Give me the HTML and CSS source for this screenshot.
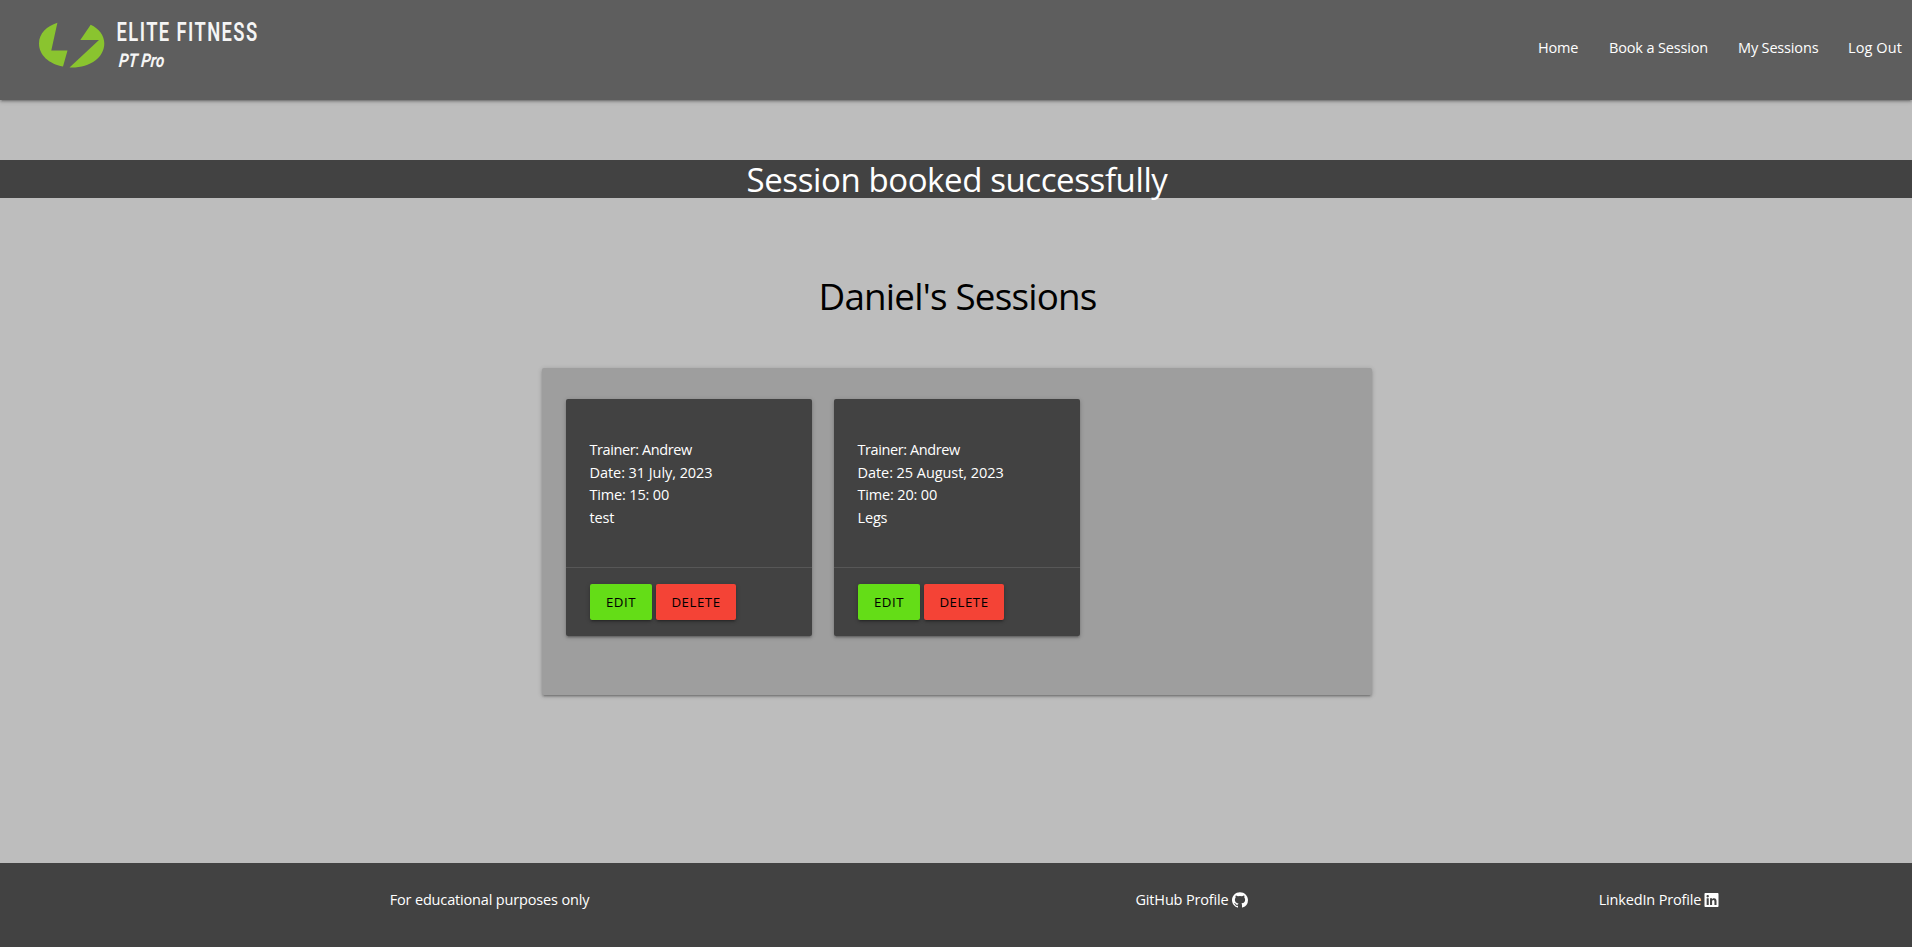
FILE: index.html
```html
<!DOCTYPE html>
<html lang="en">
<head>
<meta charset="utf-8">
<title>Elite Fitness - My Sessions</title>
<link rel="stylesheet" href="styles.css">
</head>
<body>
<header class="site-header">
  <a class="logo" aria-label="Elite Fitness PT Pro">
    <svg width="260" height="84" viewBox="30 10 260 84">
      <path fill="#8ac42f" d="M57.4 22.8 51.3 50.5H67.5L63 66.5C49 64 39 55 39 43.5C39 33.500 47 26 57.400 22.800Z"/>
      <path fill="#8ac42f" d="M90.700 24.700 80.300 40H99L69.500 67.500C89 68.500 104.300 58 104.300 43.500C104.300 35.500 99 28.500 90.700 24.700Z"/>
      <text class="logo-title" x="116.600" y="41" textLength="142" lengthAdjust="spacingAndGlyphs">ELITE FITNESS</text>
      <text class="logo-sub" transform="translate(118.500 67) skewX(-5)" textLength="45.500" lengthAdjust="spacingAndGlyphs">PT Pro</text>
    </svg>
  </a>
  <nav class="main-nav">
    <a class="nav-home">Home</a>
    <a class="nav-book">Book a Session</a>
    <a class="nav-mine">My Sessions</a>
    <a class="nav-out">Log Out</a>
  </nav>
</header>
<main class="content">
  <h4 class="flash">Session booked successfully</h4>
  <h3 class="page-title">Daniel's Sessions</h3>
  <section class="panel">
    <article class="card">
      <div class="card-content">
        <p class="trainer">Trainer: Andrew</p>
        <p class="date">Date: 31 July, 2023</p>
        <p>Time: 15: 00</p>
        <p>test</p>
      </div>
      <div class="card-action">
        <a class="btn btn-edit">EDIT</a>
        <a class="btn btn-delete">DELETE</a>
      </div>
    </article>
    <article class="card">
      <div class="card-content">
        <p class="trainer">Trainer: Andrew</p>
        <p class="date">Date: 25 August, 2023</p>
        <p>Time: 20: 00</p>
        <p>Legs</p>
      </div>
      <div class="card-action">
        <a class="btn btn-edit">EDIT</a>
        <a class="btn btn-delete">DELETE</a>
      </div>
    </article>
  </section>
</main>
<footer class="site-footer">
  <p>For educational purposes only</p>
  <a class="social"><span>GitHub Profile</span>
    <svg width="16" height="16" viewBox="0 0 16 16"><path fill="#fff" d="M8 .2C3.600.2 0 3.700 0 8.100c0 3.500 2.300 6.500 5.500 7.500.4.100.5-.2.500-.4v-1.400c-2.200.5-2.700-1-2.700-1-.4-.9-.9-1.200-.9-1.200-.7-.5.1-.5.1-.5.800.100 1.200.8 1.200.8.700 1.200 1.900.9 2.300.7.100-.5.300-.9.500-1.100-1.800-.2-3.600-.9-3.600-3.900 0-.9.300-1.600.8-2.100-.1-.2-.4-1 .1-2.100 0 0 .7-.2 2.200.8a7.600 7.600 0 0 1 4 0c1.500-1 2.200-.8 2.200-.8.400 1.100.2 1.900.1 2.100.5.600.8 1.300.8 2.100 0 3.100-1.900 3.700-3.700 3.900.3.300.6.800.6 1.500v2.200c0 .2.100.5.500.4A7.900 7.900 0 0 0 16 8.100C16 3.700 12.400.2 8 .2z"/></svg>
  </a>
  <a class="social"><span>LinkedIn Profile</span>
    <svg width="15" height="16" viewBox="0 0 448 512"><path fill="#fff" d="M416 32H31.900C14.300 32 0 46.500 0 64.300v383.400C0 465.500 14.300 480 31.900 480H416c17.600 0 32-14.500 32-32.300V64.300c0-17.800-14.400-32.300-32-32.300zM135.400 416H69V202.200h66.500V416zm-33.200-243c-21.300 0-38.500-17.300-38.500-38.500S80.900 96 102.200 96c21.200 0 38.500 17.300 38.500 38.500 0 21.300-17.200 38.500-38.500 38.500zm282.100 243h-66.400V312c0-24.800-.5-56.700-34.500-56.700-34.600 0-39.900 27-39.900 54.900V416h-66.400V202.200h63.700v29.200h.9c8.900-16.800 30.600-34.500 62.900-34.500 67.200 0 79.700 44.300 79.700 101.900V416z"/></svg>
  </a>
</footer>
</body>
</html>
```
FILE: styles.css
```css
* { box-sizing: border-box; }
body {
  margin: 0;
  min-height: 947px;
  display: flex;
  flex-direction: column;
  background: #bdbdbd;
  color: #fff;
  font: 14.5px/22.5px "Segoe UI", "Open Sans", "Noto Sans", sans-serif;
  letter-spacing: -0.16px;
}
p, h3, h4 { margin: 0; font-weight: 400; }
.site-header {
  height: 100px;
  padding: 10px 9px 0 30px;
  display: flex;
  justify-content: space-between;
  background: #5e5e5e;
  box-shadow: 0 2px 2px 0 rgba(0,0,0,.14), 0 3px 1px -2px rgba(0,0,0,.12), 0 1px 5px 0 rgba(0,0,0,.2);
}
.logo svg { display: block; overflow: visible; }
.logo-title { font: 600 26px Roboto, sans-serif; fill: #f5f5f5; letter-spacing: 2px; }
.logo-sub { font: italic 700 19px Roboto, sans-serif; fill: #f5f5f5; letter-spacing: 0; }
.main-nav { display: flex; gap: 30px; padding-top: 27px; white-space: nowrap; }
.nav-home { width: 41px; }
.nav-book { width: 99px; }
.nav-mine { width: 80px; }
.nav-out { width: 55px; letter-spacing: .1px; }
.content { flex: 1; }
.flash {
  height: 38px;
  margin-top: 60px;
  padding-left: 2px;
  background: #424242;
  font-size: 33px;
  line-height: 39px;
  text-align: center;
  letter-spacing: -0.4px;
}
.page-title {
  margin-top: 77px;
  padding-left: 3px;
  color: #000;
  font-size: 36.8px;
  line-height: 43px;
  text-align: center;
  letter-spacing: -0.8px;
}
.panel {
  width: 830px;
  height: 327px;
  margin: 50px 0 0 542px;
  padding: 31px 24px;
  display: flex;
  gap: 22px;
  align-items: flex-start;
  border-radius: 2px;
  background: #9e9e9e;
  box-shadow: 0 2px 2px 0 rgba(0,0,0,.14), 0 3px 1px -2px rgba(0,0,0,.12), 0 1px 5px 0 rgba(0,0,0,.2);
}
.card {
  width: 246px;
  border-radius: 2px;
  background: #424242;
  box-shadow: 0 2px 2px 0 rgba(0,0,0,.14), 0 3px 1px -2px rgba(0,0,0,.12), 0 1px 5px 0 rgba(0,0,0,.2);
}
.card-content { padding: 40px 24px 38px 23.5px; }
.trainer { letter-spacing: -0.4px; }
.date { letter-spacing: -0.06px; }
.card-action {
  padding: 16px 24px;
  display: flex;
  gap: 4px;
  border-top: 1px solid #575757;
}
.btn {
  height: 36px;
  border-radius: 2px;
  color: #000;
  font-size: 13.3px;
  line-height: 36px;
  text-align: center;
  letter-spacing: .5px;
  box-shadow: 0 2px 2px 0 rgba(0,0,0,.14), 0 3px 1px -2px rgba(0,0,0,.12), 0 1px 5px 0 rgba(0,0,0,.2);
}
.btn-edit { width: 62px; background: #64dd17; }
.btn-delete { width: 80px; background: #f44336; }
.site-footer {
  height: 84px;
  padding-top: 26px;
  display: grid;
  grid-template-columns: 979px 425px 510px;
  justify-items: center;
  align-items: start;
  overflow: hidden;
  background: #424242;
}
.social { display: flex; align-items: center; gap: 3px; }
.social svg { margin-top: -1px; }
```
